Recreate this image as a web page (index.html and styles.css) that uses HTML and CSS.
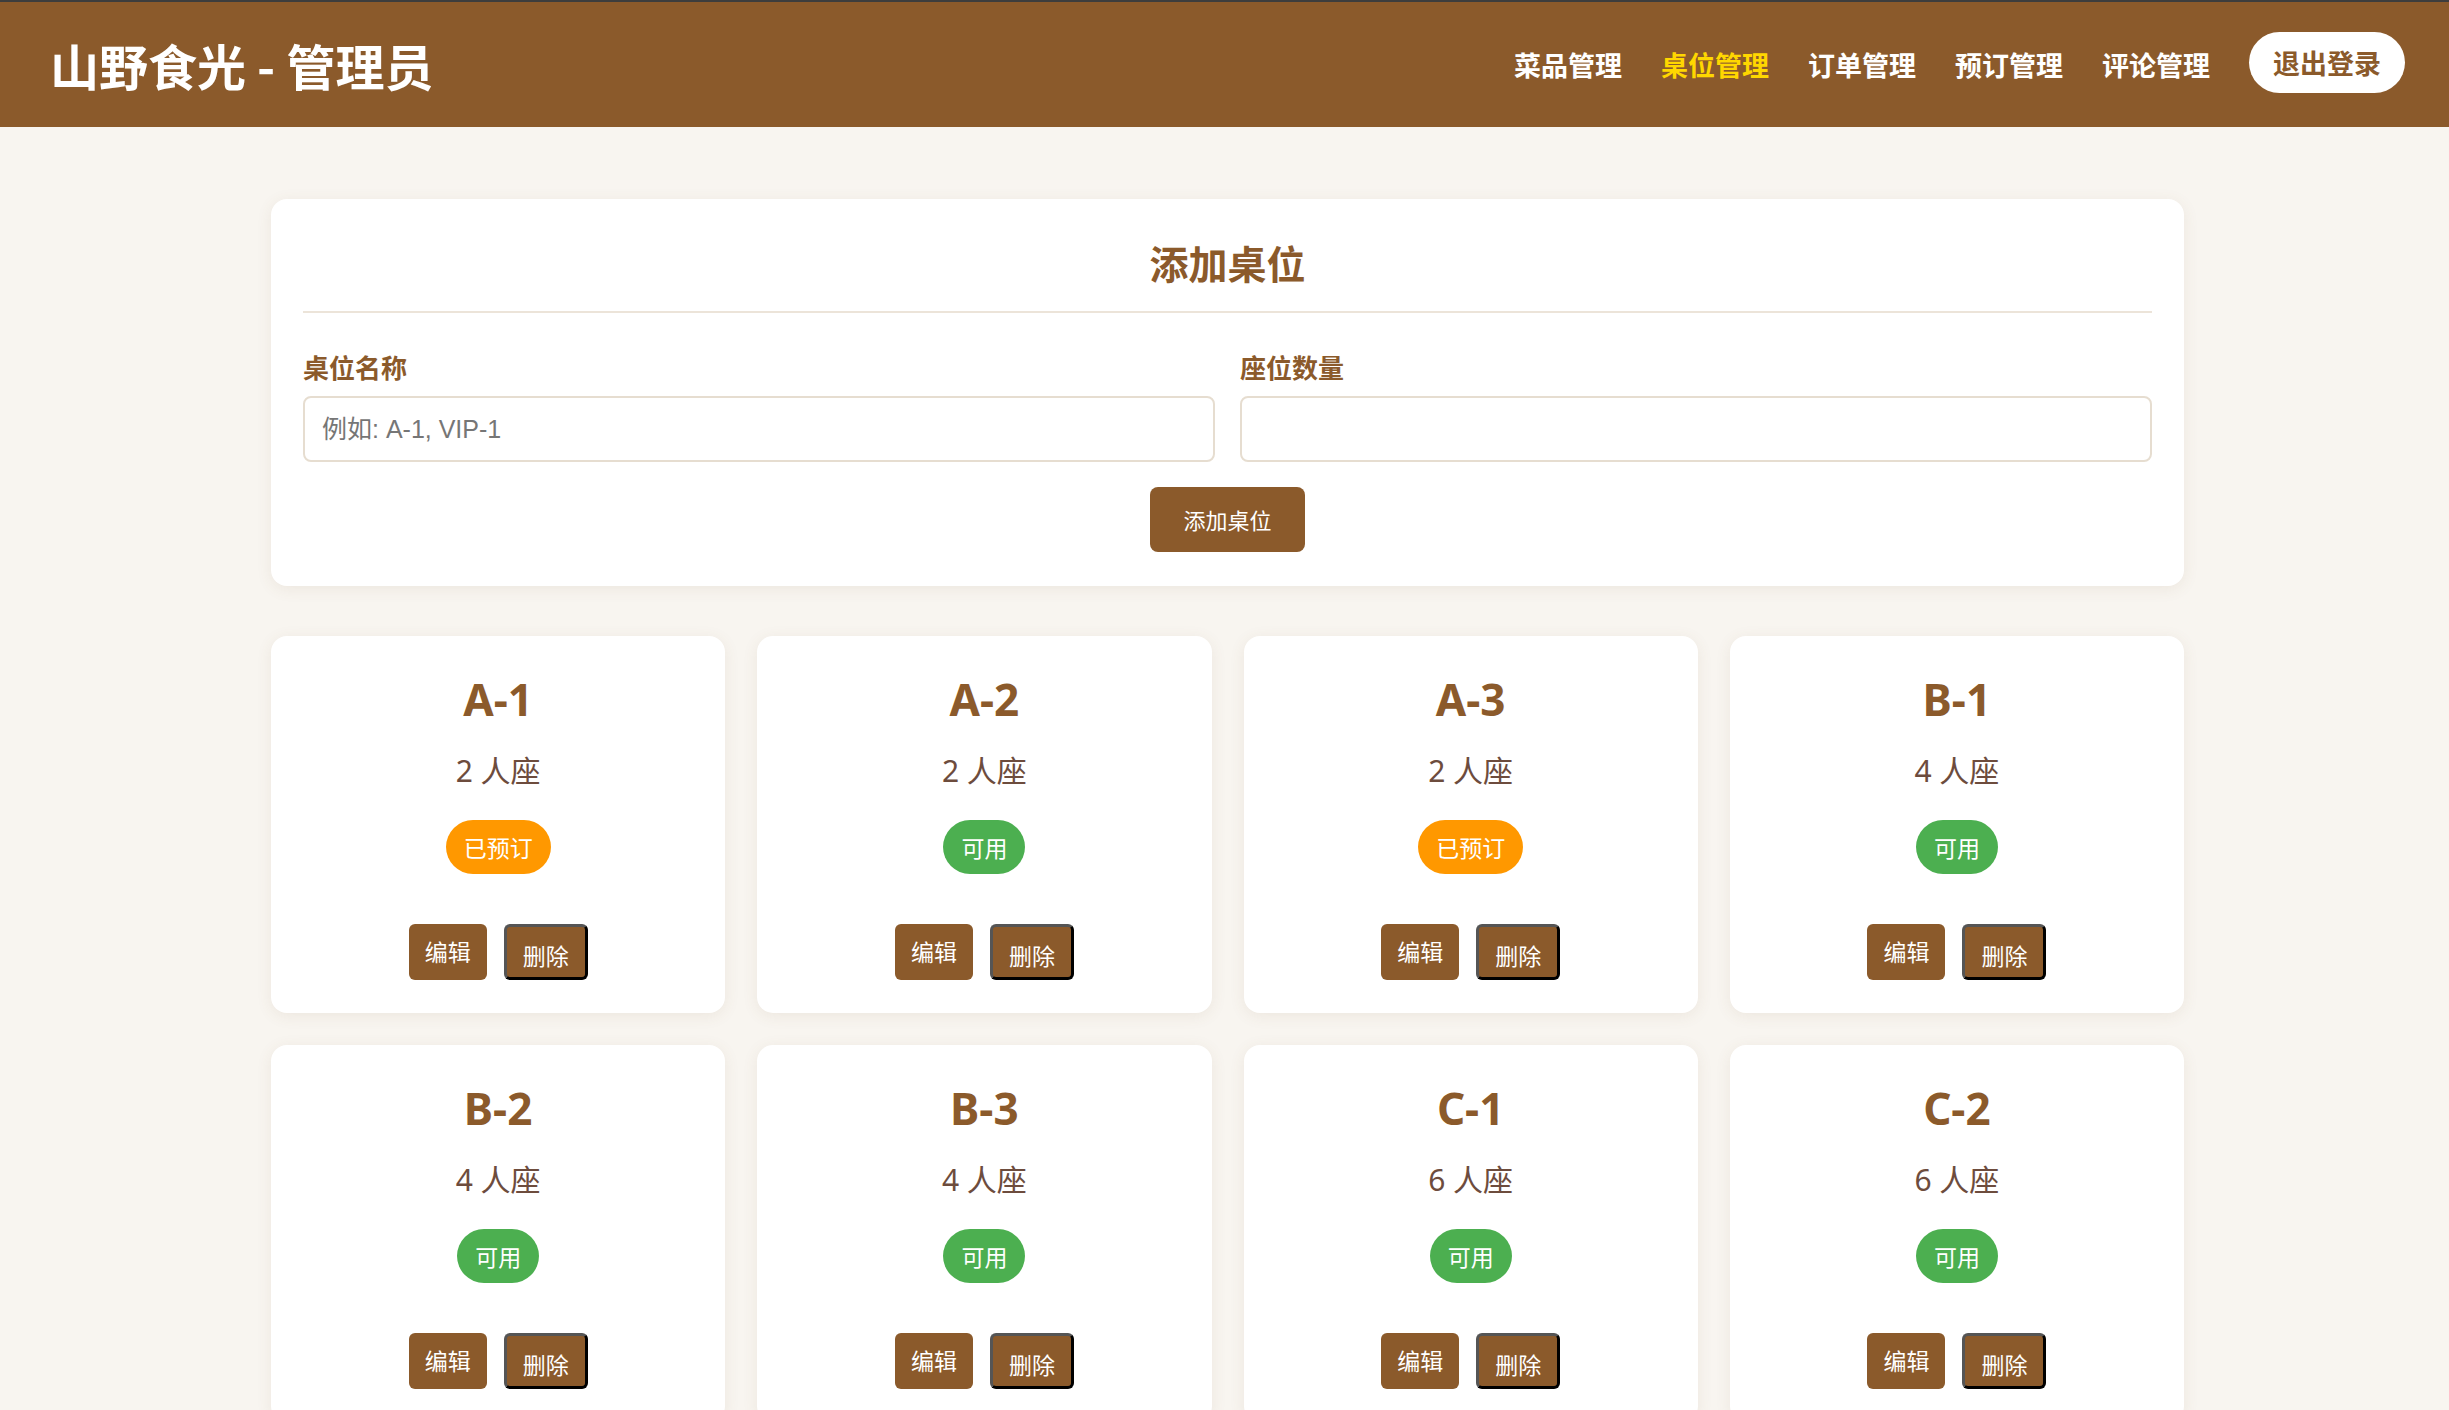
FILE: index.html
```html
<!DOCTYPE html>
<html lang="zh-CN">
<head>
<meta charset="utf-8">
<title>山野食光 - 管理员</title>
<link rel="stylesheet" href="styles.css">
</head>
<body>
<header class="topbar">
  <h1 class="brand">山野食光 - 管理员</h1>
  <nav class="nav">
    <a class="nav-link" href="#">菜品管理</a>
    <a class="nav-link active" href="#">桌位管理</a>
    <a class="nav-link" href="#">订单管理</a>
    <a class="nav-link" href="#">预订管理</a>
    <a class="nav-link" href="#">评论管理</a>
    <button class="logout" type="button">退出登录</button>
  </nav>
</header>

<main class="main">
  <div class="container">
    <section class="form-card">
      <h2 class="form-title">添加桌位</h2>
      <div class="form-grid">
        <div class="field">
          <label class="field-label">桌位名称</label>
          <input class="field-input" type="text" placeholder="例如: A-1, VIP-1">
        </div>
        <div class="field">
          <label class="field-label">座位数量</label>
          <input class="field-input" type="number">
        </div>
      </div>
      <div class="form-actions">
        <button class="btn-add" type="button">添加桌位</button>
      </div>
    </section>

    <section class="table-grid">
      <div class="table-card">
        <h3 class="table-name">A-1</h3>
        <p class="table-seats">2 人座</p>
        <span class="status booked">已预订</span>
        <div class="card-actions"><button class="btn-edit">编辑</button><button class="btn-delete">删除</button></div>
      </div>
      <div class="table-card">
        <h3 class="table-name">A-2</h3>
        <p class="table-seats">2 人座</p>
        <span class="status free">可用</span>
        <div class="card-actions"><button class="btn-edit">编辑</button><button class="btn-delete">删除</button></div>
      </div>
      <div class="table-card">
        <h3 class="table-name">A-3</h3>
        <p class="table-seats">2 人座</p>
        <span class="status booked">已预订</span>
        <div class="card-actions"><button class="btn-edit">编辑</button><button class="btn-delete">删除</button></div>
      </div>
      <div class="table-card">
        <h3 class="table-name">B-1</h3>
        <p class="table-seats">4 人座</p>
        <span class="status free">可用</span>
        <div class="card-actions"><button class="btn-edit">编辑</button><button class="btn-delete">删除</button></div>
      </div>
      <div class="table-card">
        <h3 class="table-name">B-2</h3>
        <p class="table-seats">4 人座</p>
        <span class="status free">可用</span>
        <div class="card-actions"><button class="btn-edit">编辑</button><button class="btn-delete">删除</button></div>
      </div>
      <div class="table-card">
        <h3 class="table-name">B-3</h3>
        <p class="table-seats">4 人座</p>
        <span class="status free">可用</span>
        <div class="card-actions"><button class="btn-edit">编辑</button><button class="btn-delete">删除</button></div>
      </div>
      <div class="table-card">
        <h3 class="table-name">C-1</h3>
        <p class="table-seats">6 人座</p>
        <span class="status free">可用</span>
        <div class="card-actions"><button class="btn-edit">编辑</button><button class="btn-delete">删除</button></div>
      </div>
      <div class="table-card">
        <h3 class="table-name">C-2</h3>
        <p class="table-seats">6 人座</p>
        <span class="status free">可用</span>
        <div class="card-actions"><button class="btn-edit">编辑</button><button class="btn-delete">删除</button></div>
      </div>
    </section>
  </div>
</main>
</body>
</html>
```

FILE: styles.css
```css
* { box-sizing: border-box; }

html, body {
  margin: 0;
  padding: 0;
}

body {
  background: #f8f5f0;
  font-family: "Noto Sans", "Noto Sans CJK SC", sans-serif;
  color: #333;
}

.topbar {
  height: 127px;
  background: #8b5a2b;
  border-top: 2px solid #3d3d3d;
  display: flex;
  align-items: center;
  justify-content: space-between;
  padding: 0 44px 0 50px;
}

.brand {
  margin: 0;
  color: #fff;
  font-family: "Noto Sans CJK SC", sans-serif;
  font-size: 49px;
  font-weight: 700;
  line-height: 64px;
}

.nav {
  display: flex;
  align-items: center;
  gap: 39px;
}

.nav-link {
  color: #fff;
  text-decoration: none;
  font-family: "Noto Sans CJK SC", sans-serif;
  font-size: 27px;
  font-weight: 700;
  line-height: 38px;
}

.nav-link.active {
  color: #ffd700;
}

.logout {
  background: #fff;
  color: #8b5a2b;
  border: none;
  border-radius: 31px;
  font-family: "Noto Sans CJK SC", sans-serif;
  font-size: 27px;
  font-weight: 700;
  line-height: 39px;
  padding: 11px 24px;
  margin-top: -4px;
}

.main {
  padding: 72px 0 0 6px;
}

.container {
  width: 1913px;
  margin: 0 auto;
}

.form-card {
  background: #fff;
  border-radius: 16px;
  box-shadow: 0 3px 16px rgba(120, 90, 50, 0.09);
  padding: 32px 32px 34px;
}

.form-title {
  margin: 0;
  text-align: center;
  color: #8b5a2b;
  font-family: "Noto Sans CJK SC", sans-serif;
  font-size: 39px;
  font-weight: 700;
  line-height: 62px;
  padding-bottom: 18px;
  border-bottom: 2px solid #ece4d9;
}

.form-grid {
  display: grid;
  grid-template-columns: 1fr 1fr;
  gap: 25px;
  margin-top: 36px;
}

.field-label {
  display: block;
  color: #8b5a2b;
  font-family: "Noto Sans CJK SC", sans-serif;
  font-size: 26px;
  font-weight: 700;
  line-height: 36px;
  margin-bottom: 11px;
}

.field-input {
  display: block;
  width: 100%;
  height: 66px;
  border: 2px solid #e6ddd0;
  border-radius: 8px;
  padding: 0 17px;
  font-family: "Liberation Sans", "Noto Sans CJK SC", sans-serif;
  font-size: 25px;
  color: #333;
  background: #fff;
  outline: none;
}

.field-input::placeholder {
  color: #767676;
}

.form-actions {
  display: flex;
  justify-content: center;
  margin-top: 25px;
}

.btn-add {
  background: #8b5a2b;
  color: #fff;
  border: none;
  border-radius: 8px;
  font-family: "Noto Sans CJK SC", sans-serif;
  font-size: 22px;
  line-height: 33px;
  padding: 16px 33px;
}

.table-grid {
  display: grid;
  grid-template-columns: repeat(4, 1fr);
  gap: 32px;
  margin-top: 50px;
}

.table-card {
  background: #fff;
  border-radius: 16px;
  box-shadow: 0 3px 16px rgba(120, 90, 50, 0.09);
  padding: 32px 24px 33px;
  display: flex;
  flex-direction: column;
  align-items: center;
}

.table-name {
  margin: 0;
  color: #8b5a2b;
  font-family: "Noto Sans", "Noto Sans CJK SC", sans-serif;
  font-size: 44px;
  font-weight: 700;
  line-height: 62px;
}

.table-seats {
  margin: 21px 0 0;
  color: #6d4c3d;
  font-family: "Noto Sans", "Noto Sans CJK SC", sans-serif;
  font-size: 30px;
  line-height: 40px;
}

.status {
  margin-top: 29px;
  color: #fff;
  font-family: "Noto Sans CJK SC", sans-serif;
  font-size: 23px;
  line-height: 32px;
  padding: 11px 18px;
  border-radius: 27px;
}

.status.booked { background: #ff9800; }
.status.free { background: #4caf50; }

.card-actions {
  display: flex;
  gap: 17px;
  margin-top: 50px;
}

.btn-edit,
.btn-delete {
  background: #8b5a2b;
  color: #fff;
  font-family: "Noto Sans CJK SC", sans-serif;
  font-size: 23px;
  line-height: 32px;
  border-radius: 6px;
}

.btn-edit {
  border: none;
  padding: 11px 16px 13px;
}

.btn-delete {
  border: 3px solid;
  border-color: #555 #000 #000 #555;
  padding: 12px 16px 6px;
}
```
